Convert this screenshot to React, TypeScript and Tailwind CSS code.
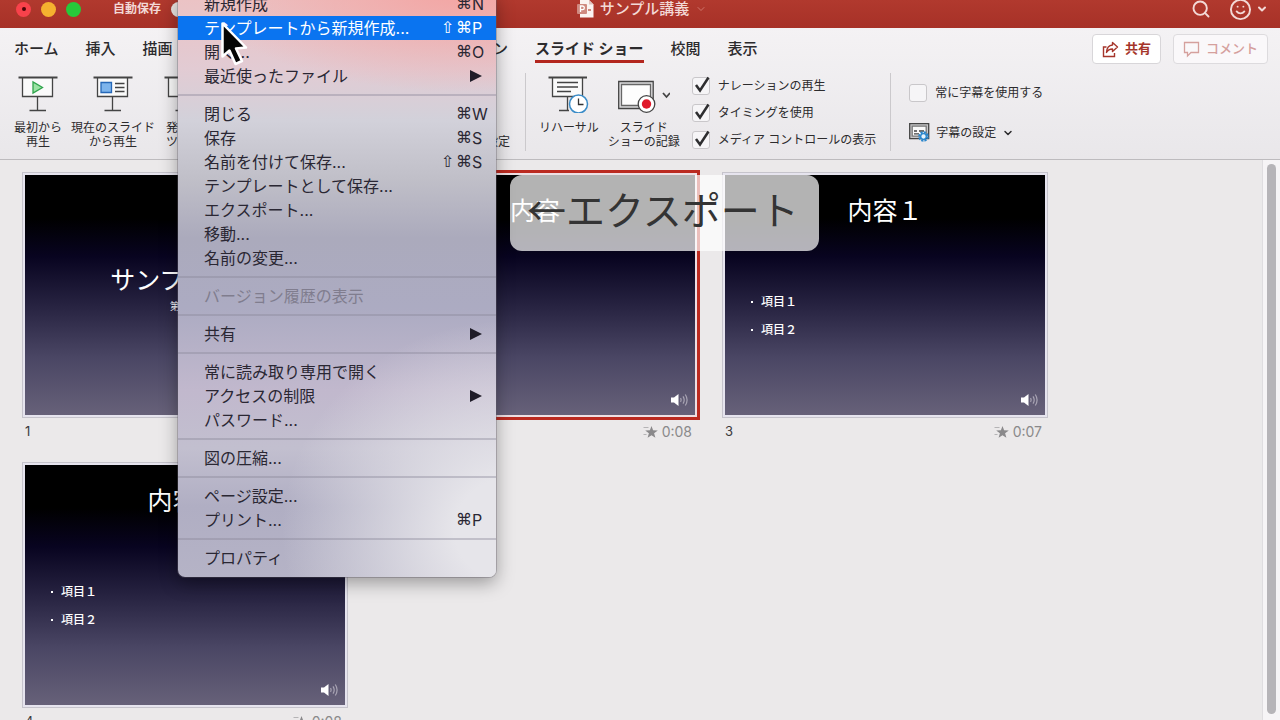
import { ReactNode } from "react";
import { ChevronDown, Search, Smile } from "lucide-react";
import clsx from "clsx";

type MenuItem = {
  label: string;
  shift?: boolean;
  shortcut?: string;
  submenu?: boolean;
  disabled?: boolean;
  active?: boolean;
};

const menuGroups: MenuItem[][] = [
  [
    { label: "新規作成", shortcut: "N" },
    { label: "テンプレートから新規作成...", shortcut: "P", shift: true, active: true },
    { label: "開く...", shortcut: "O" },
    { label: "最近使ったファイル", submenu: true },
  ],
  [
    { label: "閉じる", shortcut: "W" },
    { label: "保存", shortcut: "S" },
    { label: "名前を付けて保存...", shortcut: "S", shift: true },
    { label: "テンプレートとして保存..." },
    { label: "エクスポート..." },
    { label: "移動..." },
    { label: "名前の変更..." },
  ],
  [{ label: "バージョン履歴の表示", disabled: true }],
  [{ label: "共有", submenu: true }],
  [
    { label: "常に読み取り専用で開く" },
    { label: "アクセスの制限", submenu: true },
    { label: "パスワード..." },
  ],
  [{ label: "図の圧縮..." }],
  [{ label: "ページ設定..." }, { label: "プリント...", shortcut: "P" }],
  [{ label: "プロパティ" }],
];

const tabs = ["ホーム", "挿入", "描画", "デザイン", "画面切り替え", "アニメーション", "スライド ショー", "校閲", "表示"];

const slides = [
  { title: "サンプル講義", subtitle: "第１回", time: "0:05" },
  { title: "内容", time: "0:08", selected: true },
  { title: "内容１", items: ["項目１", "項目２"], time: "0:07" },
  { title: "内容２", items: ["項目１", "項目２"], time: "0:08" },
];

const Screen = ({ children }: { children?: ReactNode }) => (
  <svg width="40" height="38" viewBox="0 0 40 38" fill="none" stroke="#444" strokeWidth="1.3">
    <path d="M4.5 3v18.5h30V3" fill="#fafafa" />
    <path d="M0.5 2.5h39" strokeWidth="1.8" />
    <path d="M19.5 22v13.5M11.5 35.5h16.5" />
    {children}
  </svg>
);

const RibbonButton = ({ icon, lines, className }: { icon: ReactNode; lines: string[]; className?: string }) => (
  <button type="button" className={clsx("flex flex-col items-center text-xs leading-[14px] whitespace-nowrap", className)}>
    <span className="mb-2 flex h-[38px] items-center">{icon}</span>
    {lines.map((line) => (
      <span key={line}>{line}</span>
    ))}
  </button>
);

const Check = ({ label, checked }: { label: string; checked?: boolean }) => (
  <label className="flex items-center gap-2 text-xs whitespace-nowrap">
    <span className="relative flex">
      <input
        type="checkbox"
        defaultChecked={checked}
        className="peer size-[18px] appearance-none rounded-[3px] border border-[#c9c7ca] bg-[#f6f5f7]"
      />
      <svg
        className="pointer-events-none absolute -top-px left-0 hidden peer-checked:block"
        width="20"
        height="18"
        viewBox="0 0 20 18"
        fill="none"
        stroke="#2e2e30"
        strokeWidth="2.5"
      >
        <path d="M4 9l4 5.5L16.500 1.500" />
      </svg>
    </span>
    {label}
  </label>
);

const Divider = () => <div className="h-[78px] w-px bg-[#cbc9cc]" />;

const TitleBar = () => (
  <header className="flex h-7 items-center bg-linear-to-b from-[#b1392e] to-[#a73127] pb-[10px] text-[#f3d9d6]">
    <div className="flex flex-1 items-center pl-4">
      <div className="flex gap-[10px]">
        <span className="flex size-[15px] items-center justify-center rounded-full bg-[#f8424b]">
          <span className="size-1 rounded-full bg-[#4d0508]" />
        </span>
        <span className="size-[15px] rounded-full bg-[#f6b12f]" />
        <span className="size-[15px] rounded-full bg-[#27c93a]" />
      </div>
      <span className="ml-8 text-xs font-bold">自動保存</span>
      <button
        type="button"
        role="switch"
        aria-checked="false"
        aria-label="自動保存"
        className="ml-[10px] flex h-[15px] w-8 rounded-full bg-[#8d2a21]"
      >
        <span className="size-[15px] rounded-full bg-[#ece6e3]" />
      </button>
    </div>
    <h1 className="flex items-center gap-[6px] text-[15px] font-medium">
      <svg width="17" height="18" viewBox="0 0 17 18">
        <path d="M3 0h9l4.500 4.500V17.500H3z" fill="#fbf3f1" />
        <path d="M12 0v4.500h4.500" fill="#e2c3bf" />
        <rect x="0" y="4" width="10" height="10" rx="1" fill="#cf8a80" />
        <path d="M3.500 12V6h2a1.800 1.800 0 0 1 0 3.700h-2" fill="none" stroke="#fff" strokeWidth="1.300" />
        <path d="M11 10h3" stroke="#cf8a80" strokeWidth="2" />
      </svg>
      サンプル講義
      <ChevronDown size={12} className="text-[#d0766d]" />
    </h1>
    <div className="flex flex-1 items-center justify-end pr-3">
      <button type="button" aria-label="検索">
        <Search size={20} strokeWidth={2.3} />
      </button>
      <button type="button" aria-label="フィードバック" className="ml-[18px] flex items-center gap-1">
        <Smile size={23} strokeWidth={2} />
        <ChevronDown size={12} strokeWidth={4} />
      </button>
    </div>
  </header>
);

const Ribbon = () => (
  <section className="border-b border-[#bdbbbe] bg-linear-to-b from-[#f4f2f4] to-[#e9e7ea] text-[#2c2b2d]">
    <nav className="flex h-[42px] items-start pt-[6px] pr-3 pl-[14px]">
      <div className="flex flex-1 gap-[27px] text-[15px] font-medium whitespace-nowrap">
        {tabs.map((tab) => (
          <button
            key={tab}
            type="button"
            className={clsx(
              "border-b-[3px] pt-1 leading-[22px]",
              tab === "スライド ショー" ? "border-[#b3261e] font-bold" : "border-transparent",
            )}
          >
            {tab}
          </button>
        ))}
      </div>
      <div className="flex gap-3 text-[13px] font-bold whitespace-nowrap text-[#a5352b]">
        <button type="button" className="flex h-[30px] items-center gap-[6px] rounded-[4px] border border-[#d8d6d9] bg-white px-[9px]">
          <svg width="17" height="17" viewBox="0 0 17 17" fill="none" stroke="currentColor" strokeWidth="1.400">
            <path d="M4.500 6H1.500v9.500h11v-3.500" />
            <path d="M10.500 1.500l5 4.500-5 4.500V8C7.500 8 5.800 9 4.500 11.500 4.800 7 7 4.200 10.500 4z" strokeLinejoin="round" />
          </svg>
          共有
        </button>
        <button
          type="button"
          className="flex h-[30px] items-center gap-[6px] rounded-[4px] border border-[#dddbde] bg-[#faf8fa] px-[9px] font-medium text-[#d5a09d]"
        >
          <svg width="17" height="17" viewBox="0 0 17 17" fill="none" stroke="currentColor" strokeWidth="1.300">
            <path d="M1.500 1.500h14v10H8L4.500 15v-3.500h-3z" />
          </svg>
          コメント
        </button>
      </div>
    </nav>
    <div className="flex h-[89px] items-start pt-px">
      <div className="flex w-[510px] gap-[9px] pt-1 pl-[14px]">
        <RibbonButton
          lines={["最初から", "再生"]}
          icon={
            <Screen>
              <path d="M15 7v11l9.500-5.500z" fill="#9be3a4" stroke="#2fa44c" />
            </Screen>
          }
        />
        <RibbonButton
          lines={["現在のスライド", "から再生"]}
          icon={
            <Screen>
              <path d="M8 7.500h10.500v10H8z" fill="#7db4ec" stroke="#2668b8" />
              <path d="M22 8.500h9.500M22 12.500h9.500M22 16.500h9.500" />
            </Screen>
          }
        />
        <RibbonButton lines={["発表者", "ツール"]} icon={<Screen />} />
        <RibbonButton className="ml-auto" lines={["非表示", "スライドに設定"]} icon={<Screen />} />
      </div>
      <div className="ml-[15px] pt-[2px]">
        <Divider />
      </div>
      <div className="flex gap-[9px] pt-1 pl-[13px]">
        <RibbonButton
          lines={["リハーサル"]}
          icon={
            <svg width="42" height="38" viewBox="0 0 42 38" fill="none" stroke="#444" strokeWidth="1.300">
              <path d="M4.500 3v18.500h30V3" fill="#fafafa" />
              <path d="M0.500 2.500h38.500" strokeWidth="1.800" />
              <path d="M9 7.500h21M9 12h21M9 16.500h14M19.500 22v13.500M11 35.500h10" />
              <circle cx="30.500" cy="29" r="9" fill="#fff" stroke="#3a8cc8" strokeWidth="1.500" />
              <path d="M30.500 23.500V29.500h5" stroke="#333" />
            </svg>
          }
        />
        <RibbonButton
          lines={["スライド", "ショーの記録"]}
          icon={
            <svg width="52" height="38" viewBox="0 0 52 38" fill="none" stroke="#444" strokeWidth="1.300">
              <path d="M0.700 6.500h34.500v27H0.700z" fill="#dddcde" />
              <path d="M3.500 9.500h29v21h-29z" fill="#fdfdfd" stroke="#666" />
              <circle cx="28.500" cy="29" r="8.300" fill="#fff" />
              <circle cx="28.500" cy="29" r="4.700" fill="#e0192b" stroke="none" />
              <path d="M45 18l3.500 4 3.500-4" strokeWidth="1.800" />
            </svg>
          }
        />
      </div>
      <div className="flex flex-col gap-[9px] pt-[6px] pl-3">
        <Check label="ナレーションの再生" checked />
        <Check label="タイミングを使用" checked />
        <Check label="メディア コントロールの表示" checked />
      </div>
      <div className="ml-[14px] pt-[2px]">
        <Divider />
      </div>
      <div className="flex flex-col items-start gap-[21px] pt-[13px] pl-[18px]">
        <Check label="常に字幕を使用する" />
        <button type="button" className="flex items-center gap-[6px] text-xs whitespace-nowrap">
          <svg width="21" height="19" viewBox="0 0 21 19" fill="none" stroke="#444" strokeWidth="1.300">
            <path d="M0.700 0.700h19v15h-19z" fill="#c9c8ca" />
            <path d="M3.200 3.200h14v10h-14z" fill="#fafafa" stroke="#777" />
            <path d="M5 8h3M10 8h5M5 10.800h5" />
            <circle cx="14.500" cy="13.500" r="4" stroke="#2a86cc" strokeWidth="2.600" strokeDasharray="2.100 1" />
            <circle cx="14.500" cy="13.500" r="2.800" fill="#e7f3fb" stroke="#2a86cc" />
          </svg>
          字幕の設定
          <ChevronDown size={12} strokeWidth={3} />
        </button>
      </div>
    </div>
  </section>
);

const Speaker = () => (
  <svg className="absolute right-[6px] bottom-2" width="18" height="14" viewBox="0 0 18 14" fill="none" stroke="#a9a5b4" strokeWidth="1.200">
    <path d="M0 4.500h3L7.500 1v12L3 9.500H0z" fill="#fff" stroke="none" />
    <path d="M9.500 5.200q1.200 1.800 0 3.600M12 3.300q2.400 3.700 0 7.400M14.300 1.500q3.600 5.500 0 11" />
  </svg>
);

const SlideSorter = () => (
  <main className="flex min-h-0 flex-1 bg-[#ebe9ea]">
    <ol className="grid min-w-0 flex-1 auto-rows-max grid-cols-[repeat(auto-fill,320px)] gap-x-[30px] gap-y-4 pt-[15px] pl-[25px]">
      {slides.map((slide, i) => (
        <li key={slide.title}>
          <div
            className={clsx(
              "relative flex h-[240px] flex-col items-center bg-[linear-gradient(#000_18%,#080420_34%,#262240_54%,#4a4664_76%,#676179)] text-white",
              slide.selected
                ? "shadow-[0_0_0_2px_#eedfe3,0_0_0_5px_#bb2a20]"
                : "shadow-[0_0_0_2px_#e6e4ee,0_0_0_3px_#c6c4cc]",
            )}
          >
            <h2 className={clsx("relative z-20 text-[25px] leading-[30px]", slide.subtitle ? "pt-[90px]" : "pt-[21px]")}>
              {slide.title}
            </h2>
            {slide.subtitle && <p className="pt-1 text-[10px] leading-[14px]">{slide.subtitle}</p>}
            {slide.items && (
              <ul className="mt-[62px] self-start pl-[26px] text-xs leading-7 font-medium">
                {slide.items.map((item) => (
                  <li key={item} className="flex items-center gap-2">
                    <span className="size-[2px] bg-white" />
                    {item}
                  </li>
                ))}
              </ul>
            )}
            <Speaker />
          </div>
          <div className="flex h-[34px] items-center pr-[3px] text-[13px] text-[#3c3b3d]">
            <span>{i + 1}</span>
            <svg className="ml-auto" width="15" height="13" viewBox="0 0 15 13" fill="#8a898b">
              <path d="M8.500 0l1.600 4.200 4.700.2-3.700 2.900 1.300 4.500-3.900-2.600-3.900 2.600 1.300-4.500-3.700-2.900 4.700-.2z" />
              <path d="M0.500 1.500h5M0.500 8.500h3" stroke="#b5b4b6" />
            </svg>
            <span className="ml-1 text-sm text-[#8a898b]">{slide.time}</span>
          </div>
        </li>
      ))}
    </ol>
    <div className="flex w-[18px] justify-center border-l border-[#dfdde0] bg-[#f6f4f6] pt-1">
      <div className="h-[550px] w-[9px] rounded-full bg-[#b6b4b8]" />
    </div>
  </main>
);

const FileMenu = () => (
  <div
    role="menu"
    className="absolute -top-2 left-[178px] z-40 w-[318px] rounded-b-[7px] bg-[radial-gradient(ellipse_230px_210px_at_105%_92%,#e6e5ea_25%,transparent),radial-gradient(ellipse_260px_100px_at_90%_0%,#f3a5a3,transparent),linear-gradient(#ecc2c3,#e2cbd3_13%,#d2d1da_22%,#c0bfc8_32%,#abaabc_42%,#acabc2_54%,#c1b8cd_68%,#c2bfcf_78%,#b0aec3_88%,#b5b3c6)] pb-[7px] text-base text-[#2a2733] shadow-[0_6px_18px_rgba(0,0,0,0.35),0_0_0_1px_rgba(120,115,130,0.35)]"
  >
    {menuGroups.map((group, i) => (
      <div key={i}>
        {i > 0 && <div role="separator" className="my-[6px] h-[2px] bg-[#8a8799]/40" />}
        {group.map((item) => (
          <button
            key={item.label}
            type="button"
            role="menuitem"
            disabled={item.disabled}
            className={clsx(
              "flex h-6 w-full items-center pr-[2px] pl-[26px] whitespace-nowrap",
              item.active && "bg-[#0a74f0] text-white",
              item.disabled && "text-[#807d8e]",
            )}
          >
            <span className="flex-1 text-left">{item.label}</span>
            {item.shortcut && (
              <span className="flex items-center">
                {item.shift && <span className="w-[17px] font-['DejaVu_Sans']">⇧</span>}
                <span className="w-4 font-['DejaVu_Sans']">⌘</span>
                <span className="w-[22px] text-left">{item.shortcut}</span>
              </span>
            )}
            {item.submenu && (
              <svg className="mr-3" width="12" height="12" viewBox="0 0 12 12" fill="#1f1c28">
                <path d="M0 0l12 6-12 6z" />
              </svg>
            )}
          </button>
        ))}
      </div>
    ))}
  </div>
);

export default function App() {
  return (
    <div className="relative flex h-screen flex-col overflow-hidden font-['Inter','Noto_Sans_CJK_JP',sans-serif]">
      <TitleBar />
      <Ribbon />
      <SlideSorter />
      {/* the caption's text sits over the slide title, its panel under it */}
      <div className="absolute top-[175px] left-[510px] rounded-xl bg-white/70 pt-[3px] pr-5 pb-[10px] pl-[17px] text-[39px] leading-[60px] whitespace-nowrap text-[#343434]">
        <span className="relative z-30 font-['Noto_Sans_CJK_JP',sans-serif]">←エクスポート</span>
      </div>
      <FileMenu />
      <svg className="pointer-events-none absolute top-[21px] left-[220px] z-50" width="30" height="46" viewBox="0 0 30 46">
        <path
          d="M2.500 2.500v33l7-6 6 13.500 6.500-3-6-12.500 10-1z"
          fill="#050505"
          stroke="#fff"
          strokeWidth="2.500"
          strokeLinejoin="round"
        />
      </svg>
    </div>
  );
}
